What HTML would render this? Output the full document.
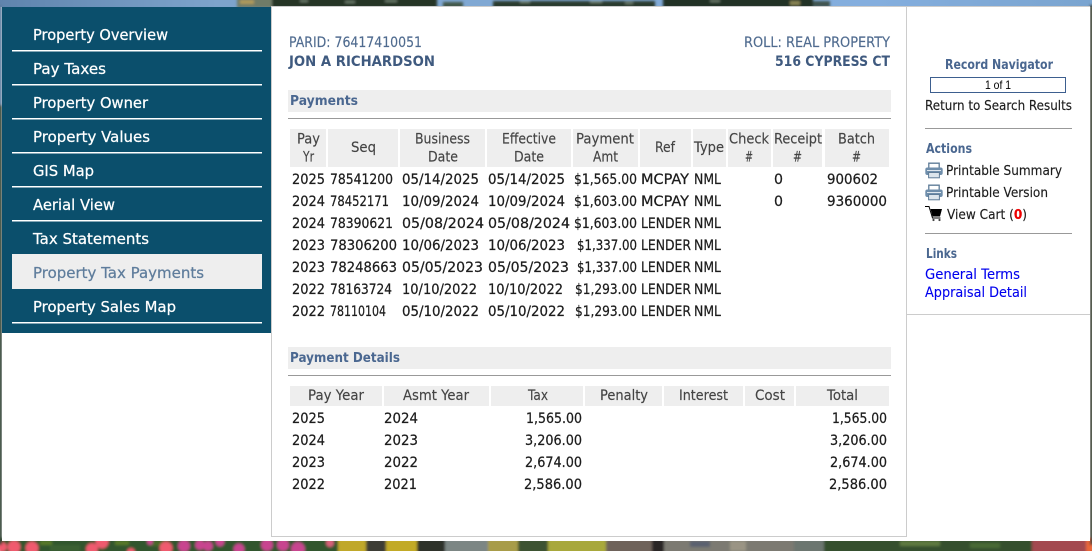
<!DOCTYPE html>
<html><head><meta charset="utf-8"><title>Property Tax Payments</title>
<style>
html,body{margin:0;padding:0;width:1092px;height:551px;overflow:hidden;background:#fff}
svg{display:block;position:absolute;left:0;top:0}
text{font-family:"DejaVu Sans",sans-serif;font-size:14.500px;fill:#1c1c1c;stroke:#1c1c1c;stroke-width:.25px;white-space:pre}
.n{font-size:15.500px;fill:#fff;stroke:#fff}
.h{fill:#444;stroke:#444;font-size:14px;stroke-width:.15px}
.b{font-weight:bold;fill:#4a6790;stroke:none;font-size:13.500px}
.s{fill:#4f6b8f;stroke:#4f6b8f;stroke-width:.15px}
.sb{fill:#3f5a7f;stroke:none;font-weight:bold}
.l{fill:#0000ee;stroke:#0000ee;stroke-width:.1px;font-size:14px}
.k{font-size:13.500px;stroke-width:.15px}
</style></head><body>
<svg width="1092" height="551" viewBox="0 0 1092 551">
<defs>
<linearGradient id="sky" x1="0" x2="1" y1="0" y2="0"><stop offset="0" stop-color="#5f84ad"/><stop offset=".2" stop-color="#7ea4cc"/><stop offset=".8" stop-color="#84aede"/><stop offset="1" stop-color="#7aa4cf"/></linearGradient>
<filter id="bl" x="-5%" y="-50%" width="110%" height="200%"><feGaussianBlur stdDeviation="1.200"/></filter>
<g id="printer"><path d="M3.800 6V1.200h10.400V6" fill="#fff" stroke="#5f7c98" stroke-width="1.300"/><rect x="0.300" y="5.500" width="17.400" height="7.500" rx="2" fill="#6f8eab"/><rect x="2" y="8" width="14" height="1" fill="#dfe7ee"/><rect x="3.600" y="10.500" width="10.800" height="5.300" fill="#dce5ec" stroke="#5f7c98"/></g>
</defs>
<!-- background -->
<rect width="1092" height="7" fill="url(#sky)"/>
<g filter="url(#bl)">
<rect x="237" y="-3" width="36" height="11" fill="#6f7c68"/><rect x="272" y="-3" width="165" height="11" fill="#263628"/><rect x="443" y="2" width="20" height="6" fill="#43594c"/><rect x="493" y="1" width="162" height="7" fill="#2a3b2e"/><rect x="663" y="-3" width="150" height="11" fill="#243226"/><rect x="813" y="1" width="17" height="6" fill="#415550"/>
<g fill="#6f8070"><rect x="300" y="0" width="8" height="2"/><rect x="345" y="1" width="10" height="2"/><rect x="385" y="0" width="12" height="2"/><rect x="520" y="1" width="10" height="2"/><rect x="590" y="1" width="12" height="2"/><rect x="625" y="2" width="8" height="2"/><rect x="710" y="0" width="10" height="2"/></g>
<rect x="790" y="1" width="10" height="4" fill="#8a8555"/><rect x="240" y="0" width="14" height="4" fill="#b09a5a"/>
<rect x="0" y="538" width="345" height="16" fill="#33562f"/>
<g fill="#5a7a2a"><rect x="40" y="541" width="12" height="4"/><rect x="50" y="545" width="30" height="6" fill="#3b6030"/><rect x="115" y="541" width="14" height="4"/><rect x="150" y="541" width="14" height="5" fill="#4a6a2a"/></g>
<g fill="#f05a6e"><circle cx="2" cy="547" r="5"/><circle cx="14" cy="547" r="6.500"/><circle cx="32" cy="548" r="6.500"/><circle cx="92" cy="549" r="6"/><circle cx="102" cy="542" r="6.500"/><circle cx="131" cy="552" r="4"/><circle cx="166" cy="548" r="6.500"/></g>
<g fill="#c8448f"><circle cx="184" cy="546" r="6"/><circle cx="200" cy="545" r="5"/><circle cx="208" cy="546" r="5"/><circle cx="220" cy="542" r="4.500"/><circle cx="239" cy="549" r="5.500"/><circle cx="267" cy="545" r="6"/><circle cx="283" cy="545" r="6"/><circle cx="298" cy="549" r="7"/><circle cx="150" cy="542" r="3"/></g>
<circle cx="330" cy="543" r="4" fill="#d8607a"/>
<rect x="338" y="538" width="28" height="16" fill="#c0a82a"/><rect x="366" y="538" width="20" height="16" fill="#3c3c34"/><rect x="386" y="538" width="31" height="16" fill="#c2aa28"/><rect x="417" y="538" width="28" height="16" fill="#2e3329"/><rect x="445" y="538" width="43" height="16" fill="#7c8684"/><rect x="488" y="538" width="30" height="16" fill="#a89c48"/><rect x="518" y="538" width="30" height="16" fill="#3d5231"/><rect x="548" y="538" width="58" height="16" fill="#a8a83a"/>
<rect x="606" y="538" width="46" height="16" fill="#6e625a"/><rect x="652" y="538" width="12" height="16" fill="#2c2826"/><rect x="664" y="538" width="130" height="16" fill="#7b7a72"/><rect x="690" y="541" width="20" height="6" fill="#5a6070"/><rect x="730" y="541" width="16" height="10" fill="#9a9484"/><rect x="794" y="538" width="30" height="16" fill="#6c7670"/><rect x="824" y="538" width="208" height="16" fill="#34502e"/><rect x="900" y="541" width="40" height="5" fill="#5f7a40"/><rect x="970" y="543" width="30" height="5" fill="#4a6a36"/><rect x="1032" y="538" width="56" height="16" fill="#a34a50"/><rect x="1086" y="538" width="8" height="16" fill="#e8683a"/>
<rect x="-2" y="5" width="4" height="100" fill="#5c7c9e"/><rect x="-2" y="105" width="4" height="440" fill="#2f3f30"/><rect x="1090" y="5" width="4" height="540" fill="#3a3f36"/>
</g>
<!-- panels -->
<rect x="271" y="6" width="819" height="1" fill="#ccc"/>
<rect x="2" y="7" width="1088" height="534" fill="#fff"/>
<rect x="2" y="7" width="269" height="326" fill="#0b4f6c"/>
<rect x="271.500" y="6.500" width="635" height="530" fill="#fff" stroke="#ccc"/>
<rect x="907" y="314" width="183" height="1" fill="#ccc"/>
<rect x="12" y="254" width="250" height="35" fill="#eee"/>
<g fill="#fff"><rect x="12" y="50" width="250" height="1.500"/><rect x="12" y="84" width="250" height="1.500"/><rect x="12" y="118" width="250" height="1.500"/><rect x="12" y="152" width="250" height="1.500"/><rect x="12" y="186" width="250" height="1.500"/><rect x="12" y="220" width="250" height="1.500"/><rect x="12" y="322" width="250" height="1.500"/></g>
<!-- nav -->
<text class="n" x="33" y="40" textLength="135" lengthAdjust="spacingAndGlyphs">Property Overview</text>
<text class="n" x="33" y="74" textLength="73" lengthAdjust="spacingAndGlyphs">Pay Taxes</text>
<text class="n" x="33" y="108" textLength="115" lengthAdjust="spacingAndGlyphs">Property Owner</text>
<text class="n" x="33" y="142" textLength="117" lengthAdjust="spacingAndGlyphs">Property Values</text>
<text class="n" x="33" y="176" textLength="61" lengthAdjust="spacingAndGlyphs">GIS Map</text>
<text class="n" x="33" y="210" textLength="82" lengthAdjust="spacingAndGlyphs">Aerial View</text>
<text class="n" x="33" y="244" textLength="116" lengthAdjust="spacingAndGlyphs">Tax Statements</text>
<text class="n" style="fill:#5f7d9c;stroke:#5f7d9c" x="33" y="278" textLength="171" lengthAdjust="spacingAndGlyphs">Property Tax Payments</text>
<text class="n" x="33" y="312" textLength="143" lengthAdjust="spacingAndGlyphs">Property Sales Map</text>
<!-- header -->
<text class="s" x="289" y="47" textLength="133" lengthAdjust="spacingAndGlyphs">PARID: 76417410051</text>
<text class="sb" x="289" y="66" textLength="146" lengthAdjust="spacingAndGlyphs">JON A RICHARDSON</text>
<text class="s" x="744" y="47" textLength="146" lengthAdjust="spacingAndGlyphs">ROLL: REAL PROPERTY</text>
<text class="sb" x="775" y="66" textLength="115" lengthAdjust="spacingAndGlyphs">516 CYPRESS CT</text>
<!-- payments -->
<rect x="288" y="90" width="603" height="22" fill="#eee"/><rect x="288" y="118" width="603" height="1" fill="#999"/>
<text class="b" x="290" y="105" textLength="68" lengthAdjust="spacingAndGlyphs">Payments</text>
<g fill="#eee"><rect x="290" y="129" width="36" height="38"/><rect x="328" y="129" width="70" height="38"/><rect x="400" y="129" width="85" height="38"/><rect x="487" y="129" width="84" height="38"/><rect x="573" y="129" width="65" height="38"/><rect x="640" y="129" width="51" height="38"/><rect x="693" y="129" width="33" height="38"/><rect x="728" y="129" width="43" height="38"/><rect x="773" y="129" width="49" height="38"/><rect x="825" y="129" width="64" height="38"/></g>
<text class="h" x="297" y="143.500" textLength="23" lengthAdjust="spacingAndGlyphs">Pay</text><text class="h" x="303" y="161.500" textLength="11" lengthAdjust="spacingAndGlyphs">Yr</text>
<text class="h" x="351" y="152" textLength="25" lengthAdjust="spacingAndGlyphs">Seq</text>
<text class="h" x="415" y="143.500" textLength="55" lengthAdjust="spacingAndGlyphs">Business</text><text class="h" x="428" y="161.500" textLength="30" lengthAdjust="spacingAndGlyphs">Date</text>
<text class="h" x="502" y="143.500" textLength="54" lengthAdjust="spacingAndGlyphs">Effective</text><text class="h" x="514" y="161.500" textLength="30" lengthAdjust="spacingAndGlyphs">Date</text>
<text class="h" x="576" y="143.500" textLength="58" lengthAdjust="spacingAndGlyphs">Payment</text><text class="h" x="593" y="161.500" textLength="25" lengthAdjust="spacingAndGlyphs">Amt</text>
<text class="h" x="655" y="152" textLength="20" lengthAdjust="spacingAndGlyphs">Ref</text>
<text class="h" x="694" y="152" textLength="30" lengthAdjust="spacingAndGlyphs">Type</text>
<text class="h" x="729" y="143.500" textLength="40" lengthAdjust="spacingAndGlyphs">Check</text><text class="h" x="745" y="161.500" textLength="8" lengthAdjust="spacingAndGlyphs">#</text>
<text class="h" x="774" y="143.500" textLength="48" lengthAdjust="spacingAndGlyphs">Receipt</text><text class="h" x="793" y="161.500" textLength="9" lengthAdjust="spacingAndGlyphs">#</text>
<text class="h" x="838" y="143.500" textLength="37" lengthAdjust="spacingAndGlyphs">Batch</text><text class="h" x="852" y="161.500" textLength="9" lengthAdjust="spacingAndGlyphs">#</text>
<!-- rows -->
<text x="292" y="184" textLength="33" lengthAdjust="spacingAndGlyphs">2025</text><text x="330" y="184" textLength="63" lengthAdjust="spacingAndGlyphs">78541200</text><text x="402" y="184" textLength="77" lengthAdjust="spacingAndGlyphs">05/14/2025</text><text x="488" y="184" textLength="77" lengthAdjust="spacingAndGlyphs">05/14/2025</text><text x="574" y="184" textLength="63" lengthAdjust="spacingAndGlyphs">$1,565.00</text><text x="641" y="184" textLength="48" lengthAdjust="spacingAndGlyphs">MCPAY</text><text x="694" y="184" textLength="27" lengthAdjust="spacingAndGlyphs">NML</text><text x="774" y="184" textLength="9" lengthAdjust="spacingAndGlyphs">0</text><text x="827" y="184" textLength="51" lengthAdjust="spacingAndGlyphs">900602</text>
<text x="292" y="206" textLength="33" lengthAdjust="spacingAndGlyphs">2024</text><text x="330" y="206" textLength="59" lengthAdjust="spacingAndGlyphs">78452171</text><text x="402" y="206" textLength="77" lengthAdjust="spacingAndGlyphs">10/09/2024</text><text x="488" y="206" textLength="77" lengthAdjust="spacingAndGlyphs">10/09/2024</text><text x="574" y="206" textLength="63" lengthAdjust="spacingAndGlyphs">$1,603.00</text><text x="641" y="206" textLength="48" lengthAdjust="spacingAndGlyphs">MCPAY</text><text x="694" y="206" textLength="27" lengthAdjust="spacingAndGlyphs">NML</text><text x="774" y="206" textLength="9" lengthAdjust="spacingAndGlyphs">0</text><text x="827" y="206" textLength="60" lengthAdjust="spacingAndGlyphs">9360000</text>
<text x="292" y="228" textLength="33" lengthAdjust="spacingAndGlyphs">2024</text><text x="330" y="228" textLength="63" lengthAdjust="spacingAndGlyphs">78390621</text><text x="402" y="228" textLength="82" lengthAdjust="spacingAndGlyphs">05/08/2024</text><text x="488" y="228" textLength="82" lengthAdjust="spacingAndGlyphs">05/08/2024</text><text x="574" y="228" textLength="63" lengthAdjust="spacingAndGlyphs">$1,603.00</text><text x="641" y="228" textLength="50" lengthAdjust="spacingAndGlyphs">LENDER</text><text x="694" y="228" textLength="27" lengthAdjust="spacingAndGlyphs">NML</text>
<text x="292" y="250" textLength="33" lengthAdjust="spacingAndGlyphs">2023</text><text x="330" y="250" textLength="67" lengthAdjust="spacingAndGlyphs">78306200</text><text x="402" y="250" textLength="77" lengthAdjust="spacingAndGlyphs">10/06/2023</text><text x="488" y="250" textLength="77" lengthAdjust="spacingAndGlyphs">10/06/2023</text><text x="577" y="250" textLength="60" lengthAdjust="spacingAndGlyphs">$1,337.00</text><text x="641" y="250" textLength="50" lengthAdjust="spacingAndGlyphs">LENDER</text><text x="694" y="250" textLength="27" lengthAdjust="spacingAndGlyphs">NML</text>
<text x="292" y="272" textLength="33" lengthAdjust="spacingAndGlyphs">2023</text><text x="330" y="272" textLength="67" lengthAdjust="spacingAndGlyphs">78248663</text><text x="402" y="272" textLength="81" lengthAdjust="spacingAndGlyphs">05/05/2023</text><text x="488" y="272" textLength="81" lengthAdjust="spacingAndGlyphs">05/05/2023</text><text x="577" y="272" textLength="60" lengthAdjust="spacingAndGlyphs">$1,337.00</text><text x="641" y="272" textLength="50" lengthAdjust="spacingAndGlyphs">LENDER</text><text x="694" y="272" textLength="27" lengthAdjust="spacingAndGlyphs">NML</text>
<text x="292" y="294" textLength="33" lengthAdjust="spacingAndGlyphs">2022</text><text x="330" y="294" textLength="62" lengthAdjust="spacingAndGlyphs">78163724</text><text x="402" y="294" textLength="75" lengthAdjust="spacingAndGlyphs">10/10/2022</text><text x="488" y="294" textLength="75" lengthAdjust="spacingAndGlyphs">10/10/2022</text><text x="575" y="294" textLength="62" lengthAdjust="spacingAndGlyphs">$1,293.00</text><text x="641" y="294" textLength="50" lengthAdjust="spacingAndGlyphs">LENDER</text><text x="694" y="294" textLength="27" lengthAdjust="spacingAndGlyphs">NML</text>
<text x="292" y="316" textLength="33" lengthAdjust="spacingAndGlyphs">2022</text><text x="330" y="316" textLength="56" lengthAdjust="spacingAndGlyphs">78110104</text><text x="402" y="316" textLength="77" lengthAdjust="spacingAndGlyphs">05/10/2022</text><text x="488" y="316" textLength="77" lengthAdjust="spacingAndGlyphs">05/10/2022</text><text x="575" y="316" textLength="62" lengthAdjust="spacingAndGlyphs">$1,293.00</text><text x="641" y="316" textLength="50" lengthAdjust="spacingAndGlyphs">LENDER</text><text x="694" y="316" textLength="27" lengthAdjust="spacingAndGlyphs">NML</text>
<!-- details -->
<rect x="288" y="347" width="603" height="22" fill="#eee"/><rect x="288" y="375" width="603" height="1" fill="#999"/>
<text class="b" x="290" y="362" textLength="110" lengthAdjust="spacingAndGlyphs">Payment Details</text>
<g fill="#eee"><rect x="290" y="386" width="92" height="20"/><rect x="384" y="386" width="105" height="20"/><rect x="491" y="386" width="92" height="20"/><rect x="585" y="386" width="77" height="20"/><rect x="664" y="386" width="79" height="20"/><rect x="745" y="386" width="49" height="20"/><rect x="796" y="386" width="93" height="20"/></g>
<text class="h" x="308" y="400" textLength="56" lengthAdjust="spacingAndGlyphs">Pay Year</text><text class="h" x="403" y="400" textLength="66" lengthAdjust="spacingAndGlyphs">Asmt Year</text><text class="h" x="528" y="400" textLength="20" lengthAdjust="spacingAndGlyphs">Tax</text><text class="h" x="600" y="400" textLength="48" lengthAdjust="spacingAndGlyphs">Penalty</text><text class="h" x="679" y="400" textLength="49" lengthAdjust="spacingAndGlyphs">Interest</text><text class="h" x="755" y="400" textLength="30" lengthAdjust="spacingAndGlyphs">Cost</text><text class="h" x="827" y="400" textLength="31" lengthAdjust="spacingAndGlyphs">Total</text>
<text x="292" y="423" textLength="33" lengthAdjust="spacingAndGlyphs">2025</text><text x="384" y="423" textLength="34" lengthAdjust="spacingAndGlyphs">2024</text><text x="526" y="423" textLength="56" lengthAdjust="spacingAndGlyphs">1,565.00</text><text x="832" y="423" textLength="55" lengthAdjust="spacingAndGlyphs">1,565.00</text>
<text x="292" y="445" textLength="33" lengthAdjust="spacingAndGlyphs">2024</text><text x="384" y="445" textLength="34" lengthAdjust="spacingAndGlyphs">2023</text><text x="525" y="445" textLength="57" lengthAdjust="spacingAndGlyphs">3,206.00</text><text x="830" y="445" textLength="57" lengthAdjust="spacingAndGlyphs">3,206.00</text>
<text x="292" y="467" textLength="33" lengthAdjust="spacingAndGlyphs">2023</text><text x="384" y="467" textLength="34" lengthAdjust="spacingAndGlyphs">2022</text><text x="525" y="467" textLength="57" lengthAdjust="spacingAndGlyphs">2,674.00</text><text x="830" y="467" textLength="57" lengthAdjust="spacingAndGlyphs">2,674.00</text>
<text x="292" y="489" textLength="33" lengthAdjust="spacingAndGlyphs">2022</text><text x="384" y="489" textLength="33" lengthAdjust="spacingAndGlyphs">2021</text><text x="524" y="489" textLength="58" lengthAdjust="spacingAndGlyphs">2,586.00</text><text x="829" y="489" textLength="58" lengthAdjust="spacingAndGlyphs">2,586.00</text>
<!-- sidebar -->
<text class="b" x="945" y="69" textLength="108" lengthAdjust="spacingAndGlyphs">Record Navigator</text>
<rect x="930.500" y="77.500" width="135" height="15" fill="#fff" stroke="#3d5f8f"/>
<text style="font-family:'Liberation Sans',sans-serif;font-size:12px;fill:#000;stroke:none" x="985" y="89" textLength="26" lengthAdjust="spacingAndGlyphs">1 of 1</text>
<text class="k" x="925" y="110" textLength="147" lengthAdjust="spacingAndGlyphs">Return to Search Results</text>
<rect x="925" y="128" width="147" height="1" fill="#999"/>
<text class="b" x="926" y="153" textLength="46" lengthAdjust="spacingAndGlyphs">Actions</text>
<use href="#printer" x="925" y="162"/>
<text class="k" x="946" y="175" textLength="116" lengthAdjust="spacingAndGlyphs">Printable Summary</text>
<use href="#printer" x="925" y="184"/>
<text class="k" x="946" y="197" textLength="102" lengthAdjust="spacingAndGlyphs">Printable Version</text>
<path d="M930.500 209h11.500l-2 7.500h-7.500z" fill="#000"/><path d="M925 206.500h4l3.500 11.500h8" fill="none" stroke="#000" stroke-width="1"/><circle cx="933.500" cy="220" r="1.100" fill="#444"/><circle cx="939.500" cy="220" r="1.100" fill="#444"/>
<text class="k" x="947" y="219" textLength="80" lengthAdjust="spacingAndGlyphs">View Cart (<tspan style="fill:#e00;stroke:#e00;font-weight:bold">0</tspan>)</text>
<rect x="925" y="233" width="147" height="1" fill="#999"/>
<text class="b" x="926" y="258" textLength="31" lengthAdjust="spacingAndGlyphs">Links</text>
<text class="l" x="925" y="279" textLength="95" lengthAdjust="spacingAndGlyphs">General Terms</text>
<text class="l" x="925" y="297" textLength="102" lengthAdjust="spacingAndGlyphs">Appraisal Detail</text>
</svg>
</body></html>
